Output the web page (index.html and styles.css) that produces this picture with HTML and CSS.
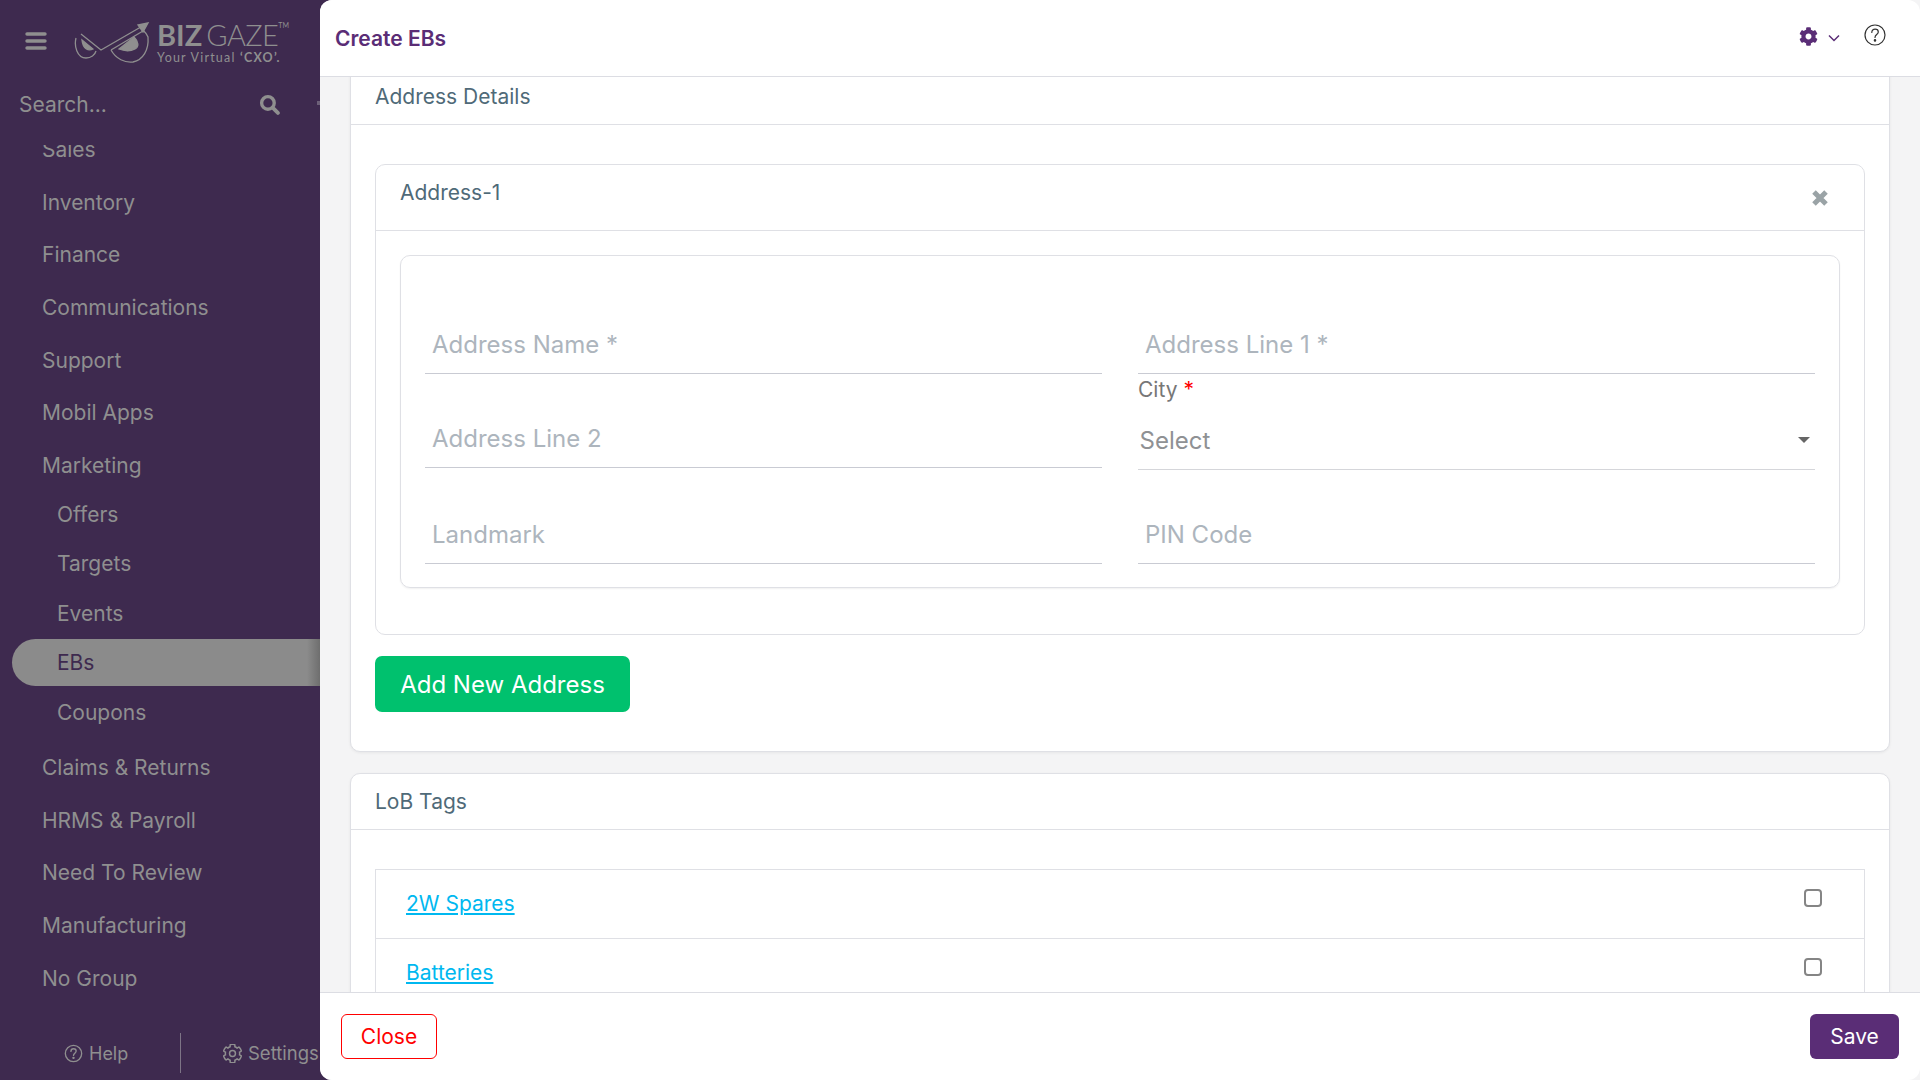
FILE: index.html
```html
<!DOCTYPE html>
<html lang="en">
<head>
  <meta charset="UTF-8">
  <title>Create EBs</title>
  <link rel="stylesheet" href="styles.css">
</head>
<body>

  <aside class="sidebar">
    <div class="brand">
      <svg class="burger" viewBox="0 0 22 20" width="22" height="20"><path d="M2 3h18M2 10h18M2 17h18" stroke="#8f8f8f" stroke-width="3.4" stroke-linecap="round"/></svg>
      <svg class="eyes" viewBox="0 0 76 42" width="76" height="42" fill="none" stroke="#8f8f8f" stroke-width="1.3">
        <path d="M2 16C0 24 3 36 12 36c5 0 9-3 10-7"/>
        <path d="M8 18l11 9c-4 2-10 1-11-9z" fill="#8f8f8f"/>
        <path d="M7 12l20 16L72 2"/>
        <path d="M74 1L64 3l5 7z" fill="#8f8f8f"/>
        <path d="M37 28c5 9 14 13 22 12 10-2 16-12 15-25-1-3-3-5-5-7"/>
        <path d="M37 28L69 9"/>
        <path d="M45 27l15-12c5 5 5 10 1 12-6 3-11 2-16 0z" fill="#8f8f8f"/>
      </svg>
      <div class="logo-text">
        <div class="logo-name"><b>BIZ</b><span>GAZE</span><sup>TM</sup></div>
        <div class="logo-tag">Your Virtual <b>‘CXO’.</b></div>
      </div>
    </div>

    <div class="search">
      <span>Search...</span>
      <svg viewBox="0 0 20 20" width="21" height="21" fill="none" stroke="#8f8f8f"><circle cx="8.5" cy="8.5" r="6" stroke-width="3.2"/><path d="M13 13l5 5" stroke-width="3.6" stroke-linecap="round"/></svg>
    </div>
    <span class="edge-dot"></span>

    <nav class="nav">
      <ul class="nav-list">
        <li class="nav-item">Sales</li>
        <li class="nav-item">Inventory</li>
        <li class="nav-item">Finance</li>
        <li class="nav-item">Communications</li>
        <li class="nav-item">Support</li>
        <li class="nav-item">Mobil Apps</li>
        <li class="nav-item">Marketing</li>
        <li class="nav-sub">Offers</li>
        <li class="nav-sub">Targets</li>
        <li class="nav-sub">Events</li>
        <li class="nav-sub active">EBs</li>
        <li class="nav-sub">Coupons</li>
        <li class="nav-item after-sub">Claims &amp; Returns</li>
        <li class="nav-item">HRMS &amp; Payroll</li>
        <li class="nav-item">Need To Review</li>
        <li class="nav-item">Manufacturing</li>
        <li class="nav-item">No Group</li>
      </ul>
    </nav>

    <div class="side-foot">
      <div class="foot-link foot-help">
        <svg viewBox="0 0 20 20" width="19" height="19" fill="none" stroke="#8f8f8f" stroke-width="1.4"><circle cx="10" cy="10" r="8.6"/><path d="M7.3 7.8c0-1.7 1.2-2.8 2.8-2.8s2.7 1 2.7 2.4c0 2.2-2.8 2.3-2.8 4.6" stroke-linecap="round"/><circle cx="10" cy="14.6" r=".6" fill="#8f8f8f"/></svg>
        Help
      </div>
      <div class="foot-link foot-settings">
        <svg viewBox="0 0 512 512" width="19" height="19" fill="none" stroke="#8f8f8f" stroke-width="40"><path d="M487.4 315.7l-42.6-24.6c4.3-23.2 4.3-47 0-70.2l42.6-24.6c4.9-2.8 7.1-8.6 5.5-14-11.1-35.6-30-67.8-54.7-94.6-3.8-4.1-10-5.1-14.8-2.3L380.8 110c-17.9-15.4-38.5-27.3-60.8-35.1V25.8c0-5.6-3.9-10.5-9.4-11.7-36.7-8.2-74.3-7.8-109.2 0-5.5 1.2-9.4 6.1-9.4 11.7V75c-22.2 7.9-42.8 19.8-60.8 35.1L88.7 85.5c-4.9-2.8-11-1.9-14.8 2.3-24.7 26.7-43.6 58.9-54.7 94.6-1.7 5.4.6 11.2 5.5 14L67.3 221c-4.3 23.2-4.3 47 0 70.2l-42.6 24.6c-4.9 2.8-7.1 8.6-5.5 14 11.1 35.6 30 67.8 54.7 94.6 3.8 4.1 10 5.1 14.8 2.3l42.6-24.6c17.9 15.4 38.5 27.3 60.8 35.1v49.2c0 5.6 3.9 10.5 9.4 11.7 36.7 8.2 74.3 7.8 109.2 0 5.5-1.2 9.4-6.1 9.4-11.7v-49.2c22.2-7.9 42.8-19.8 60.8-35.1l42.6 24.6c4.9 2.8 11 1.9 14.8-2.3 24.7-26.7 43.6-58.9 54.7-94.6 1.5-5.5-.7-11.3-5.6-14.1zM256 336c-44.1 0-80-35.9-80-80s35.9-80 80-80 80 35.9 80 80-35.9 80-80 80z"/></svg>
        Settings
      </div>
    </div>
  </aside>

  <main class="main">
    <header class="topbar">
      <h1>Create EBs</h1>
      <div class="top-actions">
        <svg viewBox="0 0 512 512" width="19" height="19" fill="#5a2d76"><path d="M487.4 315.7l-42.6-24.6c4.3-23.2 4.3-47 0-70.2l42.6-24.6c4.9-2.8 7.1-8.6 5.5-14-11.1-35.6-30-67.8-54.7-94.6-3.8-4.1-10-5.1-14.8-2.3L380.8 110c-17.9-15.4-38.5-27.3-60.8-35.1V25.8c0-5.6-3.9-10.5-9.4-11.7-36.7-8.2-74.3-7.8-109.2 0-5.5 1.2-9.4 6.1-9.4 11.7V75c-22.2 7.9-42.8 19.8-60.8 35.1L88.7 85.5c-4.9-2.8-11-1.9-14.8 2.3-24.7 26.7-43.6 58.9-54.7 94.6-1.7 5.4.6 11.2 5.5 14L67.3 221c-4.3 23.2-4.3 47 0 70.2l-42.6 24.6c-4.9 2.8-7.1 8.6-5.5 14 11.1 35.6 30 67.8 54.7 94.6 3.8 4.1 10 5.1 14.8 2.3l42.6-24.6c17.9 15.4 38.5 27.3 60.8 35.1v49.2c0 5.6 3.9 10.5 9.4 11.7 36.7 8.2 74.3 7.8 109.2 0 5.5-1.2 9.4-6.1 9.4-11.7v-49.2c22.2-7.9 42.8-19.8 60.8-35.1l42.6 24.6c4.9 2.8 11 1.9 14.8-2.3 24.7-26.7 43.6-58.9 54.7-94.6 1.5-5.5-.7-11.3-5.6-14.1zM256 336c-44.1 0-80-35.9-80-80s35.9-80 80-80 80 35.9 80 80-35.9 80-80 80z"/></svg>
        <svg class="chev" viewBox="0 0 12 8" width="12" height="8" fill="none" stroke="#5a2d76" stroke-width="1.5"><path d="M1 1.5l5 5 5-5"/></svg>
        <svg class="help-top" viewBox="0 0 22 22" width="22" height="22" fill="none" stroke="#333" stroke-width="1.2"><circle cx="11" cy="11" r="10"/><path d="M7.8 8.4c0-2 1.4-3.2 3.3-3.2s3.2 1.2 3.2 2.8c0 2.6-3.3 2.6-3.3 5.4" stroke-linecap="round"/><circle cx="11" cy="16.4" r=".7" fill="#333"/></svg>
      </div>
    </header>

    <div class="content">
      <section class="card address-card">
        <div class="card-head">Address Details</div>
        <div class="card-body">
          <div class="address">
            <div class="address-head">
              <span>Address-1</span>
              <svg viewBox="0 0 18 18" width="18" height="18"><path d="M3 3l12 12M15 3L3 15" stroke="#9aa3a6" stroke-width="5"/></svg>
            </div>
            <div class="address-body">
              <div class="form-box">
                <div class="field"><input class="line-input" placeholder="Address Name *"></div>
                <div class="field"><input class="line-input" placeholder="Address Line 1 *"></div>
                <div class="field"><input class="line-input" placeholder="Address Line 2"></div>
                <div class="field select-field">
                  <label>City <em>*</em></label>
                  <div class="fake-select"><span>Select</span><i class="caret"></i></div>
                </div>
                <div class="field"><input class="line-input" placeholder="Landmark"></div>
                <div class="field"><input class="line-input" placeholder="PIN Code"></div>
              </div>
            </div>
          </div>
          <button class="btn-green">Add New Address</button>
        </div>
      </section>

      <section class="card lob-card">
        <div class="card-head">LoB Tags</div>
        <div class="card-body">
          <div class="lob-table">
            <div class="lob-row"><a href="#">2W Spares</a><input type="checkbox"></div>
            <div class="lob-row"><a href="#">Batteries</a><input type="checkbox"></div>
          </div>
        </div>
      </section>
    </div>

    <footer class="bottombar">
      <button class="btn-close">Close</button>
      <button class="btn-save">Save</button>
    </footer>
  </main>

</body>
</html>
```

FILE: styles.css
```css
/* General Reset */
* {
  margin: 0;
  padding: 0;
  box-sizing: border-box;
}

body {
  font-family: 'Inter', 'Liberation Sans', sans-serif;
  background: #f4f4f5;
  height: 100vh;
  overflow: hidden;
  display: flex;
}

/* Sidebar runs 12px under the main panel so its round corners show dark */
.sidebar {
  width: 332px;
  margin-right: -12px;
  flex-shrink: 0;
  display: flex;
  flex-direction: column;
  position: relative;
  color: #8f8f8f;
  background: #3e2a4f;
}

.brand {
  height: 76px;
  display: flex;
  align-items: flex-start;
  padding: 19px 0 0 25px;
}

.burger {
  margin-top: 12px;
}

.eyes {
  margin: 3px 0 0 27px;
}

.logo-text {
  margin-left: 7px;
}

.logo-name {
  display: flex;
  align-items: flex-start;
  font-family: 'Lato', sans-serif;
  font-size: 29px;
  line-height: 31px;
}

.logo-name span {
  margin-left: 4px;
  font-weight: 300;
  letter-spacing: -0.6px;
}

.logo-name sup {
  font-size: 7px;
  line-height: 10px;
  margin-top: 1px;
}

.logo-tag {
  font-family: 'Lato', sans-serif;
  font-size: 12.5px;
  line-height: 14px;
  letter-spacing: 1.2px;
  margin-top: 1px;
}

.search {
  height: 69px;
  display: flex;
  align-items: center;
  justify-content: space-between;
  padding: 0 52px 13px 19px;
  font-size: 21px;
}

.edge-dot {
  position: absolute;
  left: 317px;
  top: 101px;
  width: 3px;
  height: 4px;
  background: #6c5f78;
}

.nav {
  flex: 1;
  overflow: hidden;
}

.nav-list {
  list-style: none;
  margin-top: -21px;
}

.nav-item {
  height: 52.7px;
  line-height: 52.7px;
  padding-left: 42px;
  font-size: 21px;
}

.nav-sub {
  height: 49.5px;
  line-height: 43px;
  padding-left: 57px;
  font-size: 21px;
}

.nav-sub.active {
  margin-left: 12px;
  padding-left: 45px;
  height: 47px;
  line-height: 48px;
  margin-top: -2px;
  margin-bottom: 4.5px;
  color: #3e2a4f;
  background: linear-gradient(90deg, #8b8b8b 295px, #6e6e6e 308px);
  border-radius: 24px 0 0 24px;
}

.after-sub {
  margin-top: 1.5px;
}

.side-foot {
  height: 76px;
  flex-shrink: 0;
  overflow: hidden;
  white-space: nowrap;
  display: flex;
  align-items: center;
  font-size: 18.5px;
  padding-top: 22px;
}

.foot-link {
  display: flex;
  align-items: center;
  gap: 6px;
}

.foot-help {
  margin-left: 64px;
  width: 117px;
  height: 40px;
  font-size: 18px;
  border-right: 1px solid #7d7486;
}

.foot-settings {
  margin-left: 42px;
}

/* Main area */
.main {
  flex: 1;
  min-width: 0;
  height: 100vh;
  position: relative;
  display: flex;
  flex-direction: column;
  background: #f4f4f5;
  border-radius: 12px;
  overflow: hidden;
}

.topbar {
  height: 77px;
  flex-shrink: 0;
  background: #fff;
  border-bottom: 1px solid #dcdde3;
  display: flex;
  align-items: center;
  justify-content: space-between;
  padding: 0 34px 0 15px;
}

.topbar h1 {
  font-size: 21px;
  font-weight: 600;
  color: #5a2d76;
}

.top-actions {
  display: flex;
  align-items: center;
  margin-top: -4px;
}

.chev {
  margin: 4px 0 0 10px;
}

.help-top {
  margin-left: 24px;
  margin-top: -3px;
}

.content {
  flex: 1;
  overflow: hidden;
  padding: 0 30px;
}

.card {
  background: #fff;
  border: 1px solid #dfe0e5;
  border-radius: 10px;
  box-shadow: 0 1px 3px rgba(0, 0, 0, 0.06);
}

.address-card {
  margin-top: -20px;
}

.lob-card {
  margin-top: 21px;
}

.card-head {
  height: 56px;
  padding: 0 24px;
  display: flex;
  align-items: center;
  font-size: 21px;
  color: #4f6a78;
  border-bottom: 1px solid #dfe0e5;
}

.address-card > .card-head {
  height: 67px;
  padding-top: 11px;
}

.card-body {
  padding: 39px 24px;
}

.address {
  border: 1px solid #dfe0e5;
  border-radius: 10px;
}

.address-head {
  height: 66px;
  padding: 0 35px 0 24px;
  display: flex;
  align-items: center;
  justify-content: space-between;
  font-size: 21px;
  color: #4f6a78;
  border-bottom: 1px solid #dfe0e5;
}

.address-head span {
  margin-top: -10px;
}

.address-body {
  padding: 24px 24px 46px;
}

.form-box {
  height: 333px;
  border: 1px solid #dfe0e5;
  border-radius: 10px;
  box-shadow: 0 1px 2px rgba(0, 0, 0, 0.06);
  padding: 0 24px;
  display: grid;
  grid-template-columns: 1fr 1fr;
  column-gap: 36px;
  grid-template-rows: 118px 94px 96px;
  align-items: end;
}

.line-input {
  width: 100%;
  height: 50px;
  border: none;
  border-bottom: 1px solid #c9cbd3;
  outline: none;
  padding: 0 7px 8px;
  font-family: inherit;
  font-size: 24px;
  background: transparent;
}

.line-input::placeholder {
  color: #adb5bd;
}

.select-field {
  align-self: start;
  margin-top: 1px;
}

.select-field label {
  display: block;
  font-size: 21px;
  line-height: 30px;
  color: #777;
}

.select-field em {
  color: #f00;
  font-style: normal;
}

.fake-select {
  height: 65px;
  display: flex;
  align-items: center;
  justify-content: space-between;
  padding: 6px 5px 0 1.5px;
  font-size: 24px;
  color: #8f9194;
  border-bottom: 1px solid #d5d6da;
}

.caret {
  width: 0;
  height: 0;
  border-left: 6px solid transparent;
  border-right: 6px solid transparent;
  border-top: 6px solid #666;
}

.btn-green {
  display: block;
  margin-top: 21px;
  width: 255px;
  height: 56px;
  border: none;
  border-radius: 7px;
  background: #00c16e;
  color: #fff;
  font-family: inherit;
  font-size: 24px;
}

.lob-table {
  border: 1px solid #dfe0e5;
  border-bottom: none;
}

.lob-row {
  height: 69px;
  display: flex;
  align-items: center;
  justify-content: space-between;
  padding: 0 42px 0 30px;
  border-bottom: 1px solid #dfe0e5;
}

.lob-row a {
  font-size: 21px;
  color: #00b8f0;
  margin-top: -2px;
}

.lob-row input {
  appearance: none;
  width: 18px;
  height: 18px;
  border: 2px solid #858585;
  border-radius: 4px;
  margin-top: -13px;
}

/* Footer */
.bottombar {
  height: 88px;
  flex-shrink: 0;
  background: #fff;
  border-top: 1px solid #dcdde3;
  display: flex;
  align-items: center;
  justify-content: space-between;
  padding: 0 21px;
}

.btn-close,
.btn-save {
  height: 45px;
  border-radius: 6px;
  font-family: inherit;
  font-size: 21px;
}

.btn-close {
  width: 96px;
  background: #fff;
  border: 1px solid #f00;
  color: #f00;
}

.btn-save {
  width: 89px;
  background: #5a2d76;
  border: none;
  color: #fff;
}
```
